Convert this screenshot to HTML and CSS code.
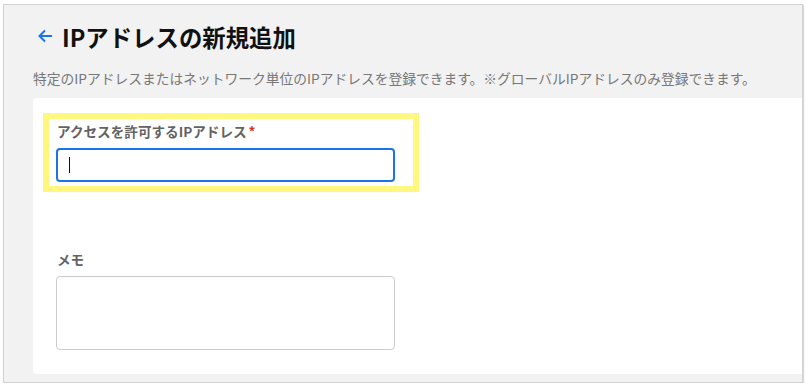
FILE: index.html
```html
<!DOCTYPE html>
<html lang="ja">
<head>
    <meta charset="UTF-8">
    <link rel="stylesheet" href="styles.css">
</head>
<body>
    <div class="frame">
        <div class="page-title">
            <svg class="back" width="16" height="14" viewBox="0 0 16 14">
                <path d="M15 7H2 M8 1.5L2.5 7L8 12.5" fill="none" stroke="#1a73e8" stroke-width="2"/>
            </svg>
            <h1>IPアドレスの新規追加</h1>
        </div>
        <p class="desc">特定のIPアドレスまたはネットワーク単位のIPアドレスを登録できます。※グローバルIPアドレスのみ登録できます。</p>
        <div class="card">
            <div class="highlight">
                <label class="field-label">アクセスを許可するIPアドレス<span class="req">*</span></label>
                <div class="text-input focused"><span class="caret"></span></div>
            </div>
            <div class="memo">
                <label class="field-label">メモ</label>
                <div class="textarea"></div>
            </div>
        </div>
    </div>
</body>
</html>
```

FILE: styles.css
```css
* {
    box-sizing: border-box;
}

body {
    margin: 0;
    background-color: #ffffff;
    font-family: "Noto Sans CJK JP", "Noto Sans", sans-serif;
}

.frame {
    margin: 4px 0 0 3px;
    width: 800px;
    background-color: #f2f2f2;
    border: 1px solid #d2d2d2;
    box-shadow: 1px 1px 1px rgba(0, 0, 0, 0.15);
    padding: 15px 0 8px 29px;
}

.page-title {
    display: flex;
    align-items: center;
    height: 34px;
}

    .page-title .back {
        margin-left: 4px;
        margin-right: 9px;
        margin-top: -2px;
    }

    .page-title h1 {
        margin: 0;
        font-size: 23.4px;
        font-weight: 700;
        color: #111111;
        line-height: 34px;
    }

.desc {
    margin: 14px 0 0 0;
    font-size: 13.75px;
    line-height: 20px;
    color: #777777;
    white-space: nowrap;
}

.card {
    margin-top: 10px;
    background-color: #ffffff;
    border-radius: 4px 0 0 4px;
    padding: 15px 0 24px 10px;
}

.highlight {
    width: 376px;
    border: 6px solid #fff77e;
    padding: 3px 18px 4px 7px;
}

.field-label {
    display: block;
    margin-left: 1px;
    font-size: 13.6px;
    font-weight: 700;
    line-height: 18px;
    color: #636363;
}

    .field-label .req {
        color: #d93025;
        margin-left: 2px;
    }

.text-input {
    margin-top: 8px;
    width: 339px;
    height: 34px;
    border: 1px solid #c8c8c8;
    border-radius: 4px;
    display: flex;
    align-items: center;
    padding-left: 11px;
}

    .text-input.focused {
        border: 2px solid #1a73e8;
    }

.caret {
    width: 1px;
    height: 16px;
    background-color: #111111;
}

.memo {
    margin-top: 58px;
    padding-left: 13px;
}

.textarea {
    margin-top: 8px;
    width: 339px;
    height: 74px;
    border: 1px solid #cccccc;
    border-radius: 4px;
}
```
